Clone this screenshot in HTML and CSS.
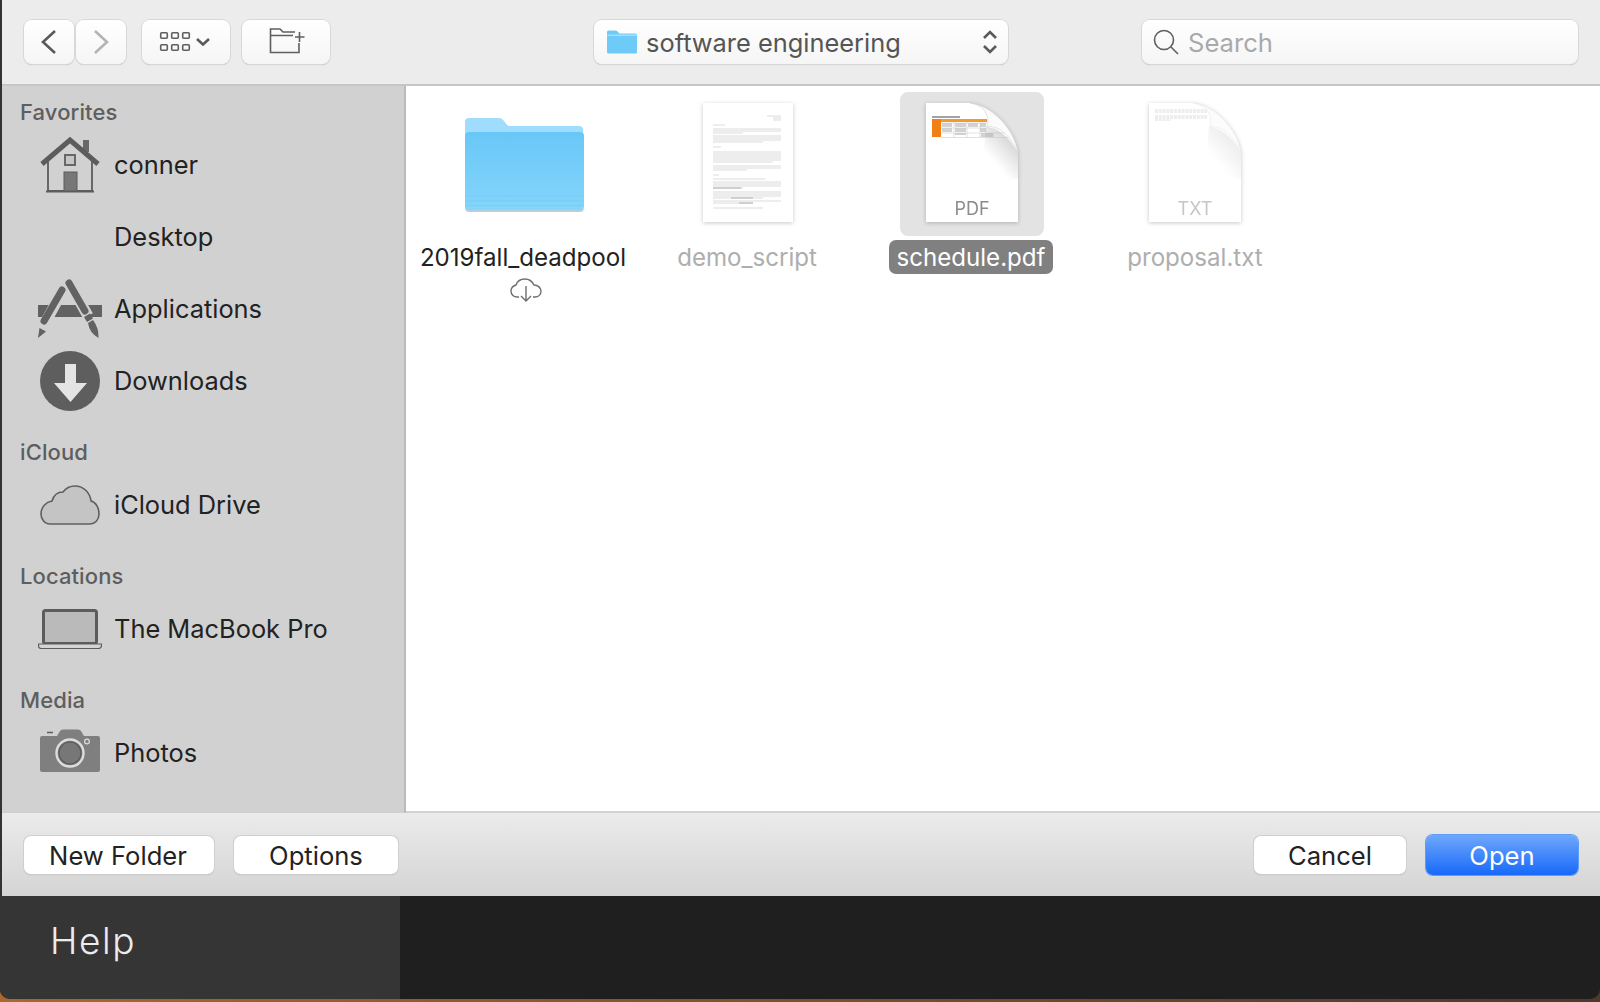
FILE: index.html
```html
<!DOCTYPE html>
<html lang="en">
<head>
    <meta charset="UTF-8">
    <title>Open</title>
    <link rel="stylesheet" href="styles.css">
</head>
<body>
    <div id="dialog">
        <!-- Toolbar -->
        <div class="toolbar">
            <div class="nav-pair">
                <div class="tool-btn nav-btn">
                    <svg width="50" height="44" viewBox="0 0 50 44"><path d="M31 11 19 22l12 11" class="stroke-dark"/></svg>
                </div>
                <div class="tool-btn nav-btn">
                    <svg width="50" height="44" viewBox="0 0 50 44"><path d="M19 11l12 11-12 11" class="stroke-light"/></svg>
                </div>
            </div>
            <div class="tool-btn wide-btn">
                <svg width="88" height="44" viewBox="0 0 88 44">
                    <g class="stroke-thin">
                        <rect x="18.700" y="12.700" width="6.600" height="5.600" rx="1"/>
                        <rect x="29.700" y="12.700" width="6.600" height="5.600" rx="1"/>
                        <rect x="40.700" y="12.700" width="6.600" height="5.600" rx="1"/>
                        <rect x="18.700" y="24.700" width="6.600" height="5.600" rx="1"/>
                        <rect x="29.700" y="24.700" width="6.600" height="5.600" rx="1"/>
                        <rect x="40.700" y="24.700" width="6.600" height="5.600" rx="1"/>
                    </g>
                    <path d="M55 19l6 5.500 6-5.500" class="stroke-dark"/>
                </svg>
            </div>
            <div class="tool-btn wide-btn">
                <svg width="88" height="44" viewBox="0 0 88 44">
                    <path d="M57 23v9.500H28.500V9h9.500l3 3h12M28.500 15.500H51" class="stroke-thin"/>
                    <path d="M53 17h9.500M57.500 12v10" class="stroke-thin"/>
                </svg>
            </div>
            <div class="tool-btn path-select">
                <svg class="path-folder" width="30" height="24" viewBox="0 0 30 24">
                    <path d="M0 2q0-1.500 1.500-1.500h7q1 0 2 1l2 2h16q1.500 0 1.500 1.500V22q0 1.500-1.500 1.500h-27Q0 23.500 0 22z" fill="#6ecbf8"/>
                    <path d="M0 6q0-1.500 1.500-1.500h27q1.500 0 1.500 1.500" fill="#a5defc"/>
                </svg>
                <span class="path-name">software engineering</span>
                <svg width="16" height="24" viewBox="0 0 16 24"><path d="M2 8l6-6 6 6M2 16l6 6 6-6" class="stroke-dark"/></svg>
            </div>
            <div class="tool-btn search-box">
                <svg width="26" height="26" viewBox="0 0 26 26"><circle cx="11" cy="11" r="9.500" class="stroke-thin"/><path d="M18 18l7 7" class="stroke-thin"/></svg>
                <span class="search-text">Search</span>
            </div>
        </div>

        <div class="browser">
            <!-- Sidebar -->
            <div class="sidebar">
                <div class="side-section">
                    <div class="side-title">Favorites</div>
                    <div class="side-row">
                        <svg class="side-icon" width="60" height="58" viewBox="0 0 60 58">
                            <rect x="43" y="4" width="6" height="12" fill="#686868"/>
                            <path d="M8 24v31h44V24" fill="none" stroke="#5c5c5c" stroke-width="1.800"/>
                            <path d="M2 28 30 4l28 24" fill="none" stroke="#5c5c5c" stroke-width="5"/>
                            <path d="M6 55.500h48" stroke="#5c5c5c" stroke-width="2"/>
                            <rect x="25" y="19" width="10" height="10" fill="#c6c6c6" stroke="#5c5c5c" stroke-width="1.800"/>
                            <rect x="24" y="36" width="13" height="19" fill="#777" stroke="#5c5c5c"/>
                        </svg>
                        <span>conner</span>
                    </div>
                    <div class="side-row">
                        <div class="side-icon"></div>
                        <span>Desktop</span>
                    </div>
                    <div class="side-row">
                        <svg class="side-icon" width="64" height="60" viewBox="0 0 64 60">
                            <rect x="0" y="26" width="64" height="12" fill="#626262"/>
                            <path d="M25 11 6 46M31 3l19 34" stroke="#d1d1d1" stroke-width="11" fill="none"/>
                            <path d="M24 11 6 42" stroke="#626262" stroke-width="7" stroke-linecap="round" fill="none"/>
                            <path d="M31 4l16 28" stroke="#626262" stroke-width="7" stroke-linecap="round" fill="none"/>
                            <path d="M0 59l1.500-10 6.500 3.500zM46 38l6-3.500 3 5-6 3.500zM50 44l5-3q6 8 5.500 18-9-5-10.500-15z" fill="#626262"/>
                        </svg>
                        <span>Applications</span>
                    </div>
                    <div class="side-row">
                        <svg class="side-icon" width="60" height="60" viewBox="0 0 60 60">
                            <circle cx="30" cy="30" r="30" fill="#5e5e5e"/>
                            <path d="M25 13h11v19h11L30.500 51 14 32h11z" fill="#e4e4e4"/>
                        </svg>
                        <span>Downloads</span>
                    </div>
                </div>
                <div class="side-section">
                    <div class="side-title">iCloud</div>
                    <div class="side-row">
                        <svg class="side-icon" width="60" height="40" viewBox="0 0 60 40">
                            <path d="M10 39C4 39 1 33 1 29c0-7 5-12 11-13 2-7 7-9 11-9 3-4 8-6 12-6 9 0 15 7 16 15 5 1 8 7 8 13 0 6-4 10-9 10z" fill="#c4c4c4" stroke="#5f5f5f" stroke-width="1.600"/>
                        </svg>
                        <span>iCloud Drive</span>
                    </div>
                </div>
                <div class="side-section">
                    <div class="side-title">Locations</div>
                    <div class="side-row">
                        <svg class="side-icon" width="64" height="40" viewBox="0 0 64 40">
                            <rect x="5.500" y="1.500" width="53" height="33" rx="2" fill="#bababa" stroke="#5c5c5c" stroke-width="3"/>
                            <path d="M.500 35h63v1.500q0 3-3 3h-57q-3 0-3-3z" fill="#d4d4d4" stroke="#5c5c5c" stroke-width="1.200"/>
                        </svg>
                        <span>The MacBook Pro</span>
                    </div>
                </div>
                <div class="side-section">
                    <div class="side-title">Media</div>
                    <div class="side-row">
                        <svg class="side-icon camera-icon" width="60" height="44" viewBox="0 0 60 44">
                            <path d="M2 7h15l3-5q1-1.500 3-1.500h15q2 0 3 1.500l3 5h14q2 0 2 2v32q0 2-2 2H2q-2 0-2-2V9q0-2 2-2z" fill="#7f7f7f"/>
                            <path d="M7 3.500h6" stroke="#5c5c5c" stroke-width="1.500"/>
                            <circle cx="30" cy="24" r="13.500" fill="#7a7a7a" stroke="#dcdcdc" stroke-width="2.400"/>
                            <circle cx="30" cy="24" r="11" fill="#777" stroke="#5c5c5c" stroke-width="1.200"/>
                            <circle cx="47" cy="12.500" r="2.400" fill="#808080" stroke="#dcdcdc" stroke-width="1.200"/>
                        </svg>
                        <span>Photos</span>
                    </div>
                </div>
            </div>

            <!-- Files -->
            <div class="files">
                <div class="file">
                    <div class="thumb">
                        <svg class="folder-icon" width="120" height="96" viewBox="0 0 120 96">
                            <defs>
                                <linearGradient id="folderFill" x1="0" y1="0" x2="0" y2="1">
                                    <stop offset="0" stop-color="#69c7f7"/>
                                    <stop offset="1" stop-color="#84d5fb"/>
                                </linearGradient>
                            </defs>
                            <path d="M1 5q0-4 4-4h30q3 0 5 3l3 4q1 1 3 1h69q4 0 4 4v76q0 4-4 4H5q-4 0-4-4z" fill="#9fdcfd"/>
                            <path d="M1 19q0-4 4-4h111q4 0 4 4v70q0 4-4 4H5q-4 0-4-4z" fill="url(#folderFill)"/>
                            <path d="M1 79h119M1 84h119M1 88.500h119" stroke="#76cdf5" stroke-width="1"/>
                            <path d="M1 89q0 4 4 4h111q4 0 4-4v2q0 4-4 4H5q-4 0-4-4z" fill="#b5cfdc"/>
                        </svg>
                    </div>
                    <div class="file-name">2019fall_deadpool</div>
                    <svg class="cloud-badge" width="32" height="24" viewBox="0 0 32 24">
                        <path d="M9 19H7c-3 0-6-2-6-6 0-3 2-5 5-6 1-3 4-6 9-6 4 0 7 2 9 6 4 0 7 3 7 6 0 4-3 6-6 6h-2" fill="none" stroke="#6e6e6e" stroke-width="1.400"/>
                        <path d="M16 8v15M11 18l5 5 5-5" fill="none" stroke="#6e6e6e" stroke-width="1.400"/>
                    </svg>
                </div>
                <div class="file dimmed">
                    <div class="thumb">
                        <svg class="doc" width="92" height="122" viewBox="0 0 92 122">
                            <rect x="2" y="0" width="90" height="119" fill="#fff"/>
                            <g class="doc-lines">
                                <path d="M66 13h14M72 15h8M72 17h8M12 22h12M12 26h68M12 28h68M12 30h30M12 33h68M12 35h68M12 37h68M12 39h50M12 44h8M12 49h68M12 51h68M12 53h68M12 55h68M12 57h68M12 59h60M12 63h68M12 65h68M12 67h34M12 72h6M12 76h52M12 79h68M12 81h68M12 83h68M12 85h30M12 89h68M12 91h68M12 93h68M12 95h50M12 98h68M12 100h40M12 105h50" stroke="#cbcbcb" stroke-width="0.700"/>
                                <path d="M12 85h28M30 95h22M38 100h14" stroke="#9a9a9a" stroke-width="0.700"/>
                            </g>
                        </svg>
                    </div>
                    <div class="file-name">demo_script</div>
                </div>
                <div class="file selected">
                    <div class="thumb">
                        <svg class="doc" width="92" height="122" viewBox="0 0 92 122">
                            <defs>
                                <linearGradient id="foldShade" x1="0.900" y1="0.300" x2="0.500" y2="0.800">
                                    <stop offset="0" stop-color="#d6d6d6"/>
                                    <stop offset="1" stop-color="#ffffff"/>
                                </linearGradient>
                            </defs>
                            <path d="M0 0H44C64 2 88 24 92 50v69H0z" fill="#fff"/>
                            <path d="M60 24c10 0 22 8 32 26v26H55z" fill="url(#foldShade)"/>
                            <g class="doc-lines">
                                <path d="M6 14h28" stroke="#666" stroke-width="1.200"/>
                                <rect x="6" y="16" width="9" height="18" fill="#f07f16"/>
                                <rect x="15" y="16" width="46" height="3" fill="#f39a2a"/>
                                <path d="M16 21h10M29 21h11M16 23h10M29 23h11M42 21h10M42 23h10M16 26h10M29 26h11M16 28h10M29 28h11M29 31h11M54 21h6M54 23h6M54 26h6M54 28h6M55 31h12M55 33h12" stroke="#8f8f8f" stroke-width="0.800"/>
                                <path d="M15 20h46M15 25h46M15 30h68M15 34.500h68M28 19v16M41 19v16M54 19v16M68 30v5" stroke="#c4c4c4" stroke-width="0.500"/>
                            </g>
                            <path d="M44 0C58 2 64 12 61 24c10-2 22 6 31 26C88 24 64 2 44 0z" fill="#fbfbfb" stroke="#cfcfcf" stroke-width="0.600"/>
                            <text x="46" y="112" class="doc-ext">PDF</text>
                        </svg>
                    </div>
                    <div class="file-name">schedule.pdf</div>
                </div>
                <div class="file dimmed">
                    <div class="thumb">
                        <svg class="doc" width="92" height="122" viewBox="0 0 92 122">
                            <defs>
                                <linearGradient id="foldShadeLight" x1="0.900" y1="0.300" x2="0.500" y2="0.800">
                                    <stop offset="0" stop-color="#ececec"/>
                                    <stop offset="1" stop-color="#ffffff"/>
                                </linearGradient>
                            </defs>
                            <path d="M0 0H44C64 2 88 24 92 50v69H0z" fill="#fff"/>
                            <path d="M60 24c10 0 22 8 32 26v26H55z" fill="url(#foldShadeLight)"/>
                            <g class="doc-lines">
                                <path d="M6 7h52M6 9h52M6 13h52M6 15h52M6 17h16" stroke="#dcdcdc" stroke-width="1" stroke-dasharray="3 0.800"/>
                            </g>
                            <path d="M44 0C58 2 64 12 61 24c10-2 22 6 31 26C88 24 64 2 44 0z" fill="#fcfcfc" stroke="#e8e8e8" stroke-width="0.600"/>
                            <text x="46" y="112" class="doc-ext">TXT</text>
                        </svg>
                    </div>
                    <div class="file-name">proposal.txt</div>
                </div>
            </div>
        </div>

        <!-- Bottom buttons -->
        <div class="actions">
            <div class="push-btn btn-new">New Folder</div>
            <div class="push-btn btn-options">Options</div>
            <div class="push-btn btn-cancel">Cancel</div>
            <div class="push-btn btn-open">Open</div>
        </div>
    </div>

    <div class="help-bar">
        <div class="help-tab">Help</div>
    </div>
</body>
</html>
```

FILE: styles.css
```css
/* Reset some default styles */
* {
    box-sizing: border-box;
}

body {
    margin: 0;
    width: 1600px;
    height: 1002px;
    overflow: hidden;
    background: linear-gradient(to right, #a8682f, #4c3a2a);
    font-family: 'Inter', 'Liberation Sans', sans-serif;
    color: #222;
}

/* Dialog */
#dialog {
    height: 896px;
    display: flex;
    flex-direction: column;
    border-left: 2px solid #333;
    background: #ececec;
}

.toolbar {
    height: 86px;
    flex: none;
    display: flex;
    align-items: flex-start;
    padding: 20px 22px 0 22px;
    background: #ececec;
    border-bottom: 2px solid #c6c6c6;
}

.tool-btn {
    height: 44px;
    flex: none;
    display: flex;
    align-items: center;
    background: linear-gradient(#ffffff, #f5f5f5);
    border-radius: 8px;
    box-shadow: 0 0 0 1px #d8d8d8, 0 1px 1px #b4b4b4;
}

.nav-pair {
    display: flex;
    gap: 2px;
}

.wide-btn {
    width: 88px;
    margin-left: 12px;
}

.nav-pair + .wide-btn {
    margin-left: 16px;
}

.nav-btn {
    width: 50px;
}

.path-select {
    width: 414px;
    margin-left: 264px;
    padding: 0 10px 0 13px;
}

.path-folder {
    flex: none;
}

.path-name {
    flex: 1;
    margin-left: 9px;
    font-size: 25.4px;
    color: #555;
}

.search-box {
    width: 436px;
    margin-left: 134px;
    padding-left: 11px;
}

.search-text {
    margin-left: 9px;
    font-size: 25.6px;
    color: #a9a9a9;
}

.stroke-dark, .stroke-light, .stroke-thin {
    fill: none;
}

.stroke-dark {
    stroke: #5a5a5a;
    stroke-width: 2.6;
}

.stroke-light {
    stroke: #b4b4b4;
    stroke-width: 2.6;
}

.stroke-thin {
    stroke: #5f5f5f;
    stroke-width: 1.6;
}

/* Main area */
.browser {
    height: 727px;
    flex: none;
    display: flex;
}

.sidebar {
    width: 404px;
    flex: none;
    padding-top: 9px;
    background: #d1d1d1;
    border-right: 2px solid #b9b9b9;
    border-bottom: 1px solid #cfcfcf;
}

.side-section {
    margin-bottom: 18px;
}

.side-title {
    height: 34px;
    line-height: 34px;
    padding-left: 18px;
    font-size: 22px;
    font-weight: 500;
    letter-spacing: 0.1px;
    color: #5e5e5e;
}

.side-row {
    height: 72px;
    display: flex;
    align-items: center;
    font-size: 25.4px;
    color: #222;
}

.side-row span {
    margin-bottom: 2px;
}

.side-icon {
    flex: none;
    width: 64px;
    margin: 0 12px 0 36px;
}

.camera-icon {
    margin-top: -4px;
}

.files {
    flex: 1;
    display: flex;
    align-items: flex-start;
    padding: 6px 0 0 5px;
    background: #fff;
    border-bottom: 2px solid #d2d2d2;
}

.file {
    width: 224px;
    display: flex;
    flex-direction: column;
    align-items: center;
}

.thumb {
    width: 144px;
    height: 144px;
    display: flex;
    align-items: center;
    justify-content: center;
    border-radius: 8px;
}

.selected .thumb {
    background: #e3e3e3;
    margin-left: 2px;
}

.folder-icon {
    margin: 2px 0 0 1px;
}

.doc {
    filter: drop-shadow(0 1px 2px rgba(0, 0, 0, 0.22));
}

.doc-lines {
    filter: blur(0.35px);
}

.doc-ext {
    font-size: 18px;
    text-anchor: middle;
    fill: #8c8c8c;
}

.dimmed .doc-ext {
    fill: #c6c6c6;
}

.file-name {
    height: 34px;
    line-height: 36px;
    margin-top: 4px;
    padding: 0 7px;
    border-radius: 7px;
    font-size: 24.1px;
    white-space: nowrap;
}

.dimmed .file-name {
    color: #aeaeae;
}

.selected .file-name {
    background: #808080;
    color: #fff;
}

.cloud-badge {
    margin: 4px 0 0 6px;
}

/* Bottom buttons */
.actions {
    height: 83px;
    flex: none;
    display: flex;
    align-items: center;
    padding: 0 22px;
    background: linear-gradient(#ebebeb, #d4d4d4);
}

.push-btn {
    height: 38px;
    line-height: 40px;
    text-align: center;
    font-size: 25.6px;
    background: #fff;
    border-radius: 7px;
    box-shadow: 0 0 0 1px #cfcfcf, 0 1px 1px #9c9c9c;
}

.btn-new {
    width: 190px;
    padding-right: 2px;
}

.btn-options {
    width: 164px;
    margin-left: 20px;
}

.btn-cancel {
    width: 152px;
    margin-left: auto;
}

.btn-open {
    width: 152px;
    height: 40px;
    line-height: 42px;
    margin-left: 20px;
    color: #fff;
    background: linear-gradient(#6fa7fb, #1869fa);
    box-shadow: 0 0 0 1px #5f9cf5;
}

/* Help bar */
.help-bar {
    height: 103px;
    display: flex;
    background: #1f1f1f;
    border-radius: 0 0 10px 10px;
}

.help-tab {
    width: 400px;
    padding-left: 50px;
    line-height: 90px;
    font-size: 37px;
    font-weight: 300;
    letter-spacing: 1.6px;
    color: #ececec;
    background: #353535;
    border-bottom-left-radius: 10px;
}
```
